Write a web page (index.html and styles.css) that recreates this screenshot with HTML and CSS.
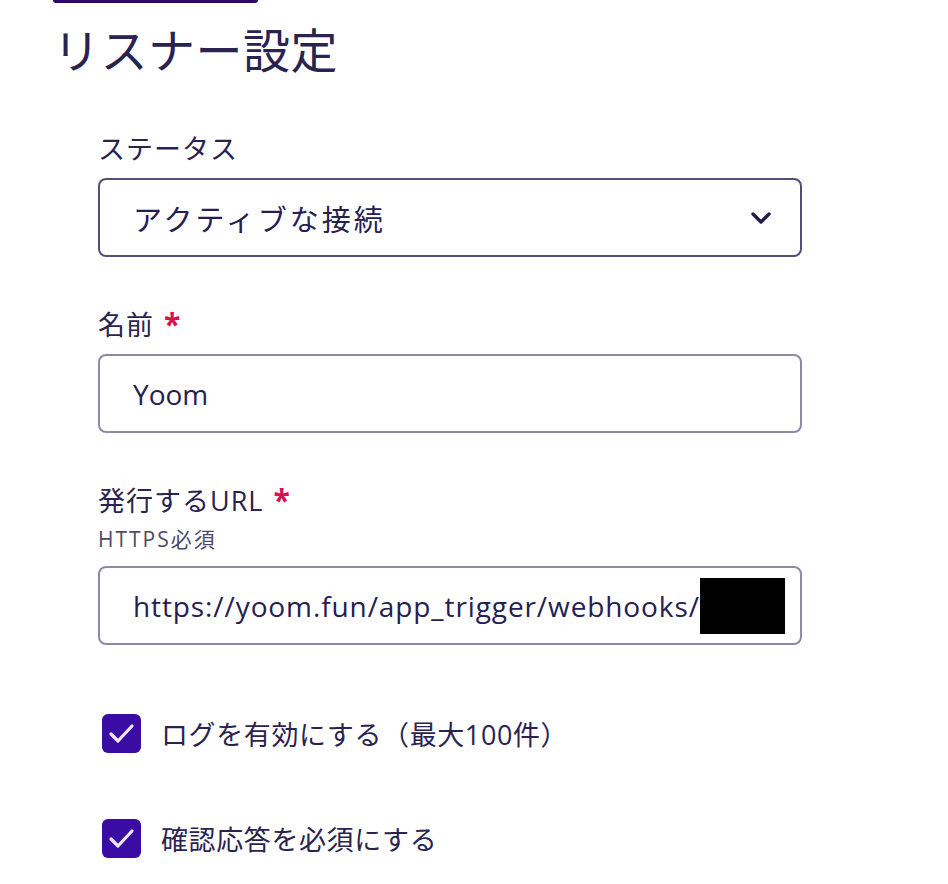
FILE: index.html
```html
<!DOCTYPE html>
<html lang="ja">
<head>
<meta charset="utf-8">
<title>リスナー設定</title>
<link rel="stylesheet" href="styles.css">
</head>
<body>
<div class="page">
  <div class="top-button"></div>
  <h1 class="title">リスナー設定</h1>
  <form class="form">
    <div class="field">
      <label class="label">ステータス</label>
      <div class="control select">
        <span class="value jp">アクティブな接続</span>
        <svg class="chevron" width="22" height="14" viewBox="0 0 22 14"><path d="M3 3 L11 11 L19 3" fill="none" stroke="#231c4a" stroke-width="3.4" stroke-linecap="round" stroke-linejoin="round"/></svg>
      </div>
    </div>
    <div class="field">
      <label class="label">名前 <span class="req">*</span></label>
      <div class="control"><span class="value">Yoom</span></div>
    </div>
    <div class="field">
      <label class="label">発行するURL <span class="req">*</span></label>
      <div class="hint">HTTPS必須</div>
      <div class="control url">
        <span class="value">https://yoom.fun/app_trigger/webhooks/</span>
        <span class="redact"></span>
      </div>
    </div>
    <div class="checks">
      <div class="check-row">
        <span class="checkbox"><svg width="39" height="39" viewBox="0 0 39 39"><path d="M9 20 L16 27 L30 12" fill="none" stroke="#f3e6f4" stroke-width="3.2" stroke-linecap="round" stroke-linejoin="round"/></svg></span>
        <span class="check-label">ログを有効にする（最大100件）</span>
      </div>
      <div class="check-row">
        <span class="checkbox"><svg width="39" height="39" viewBox="0 0 39 39"><path d="M9 20 L16 27 L30 12" fill="none" stroke="#f3e6f4" stroke-width="3.2" stroke-linecap="round" stroke-linejoin="round"/></svg></span>
        <span class="check-label">確認応答を必須にする</span>
      </div>
    </div>
  </form>
</div>
</body>
</html>
```

FILE: styles.css
```css
* { box-sizing: border-box; }
html, body { margin: 0; padding: 0; background: #ffffff; }
body {
  font-family: "Open Sans", "Noto Sans CJK JP", sans-serif;
  color: #2a2350;
}
.page {
  width: 948px;
  height: 884px;
  overflow: hidden;
}
.top-button {
  margin-left: 53px;
  width: 205px;
  height: 3px;
  background: #2b0a5f;
  border-radius: 0 0 6px 6px;
}
.title {
  margin: 17px 0 0 53px;
  font-size: 47px;
  font-weight: 400;
  line-height: 60px;
  color: #2a2350;
  letter-spacing: 0.5px;
}
.form {
  margin: 49px 0 0 98px;
  width: 704px;
}
.field {
  display: flex;
  flex-direction: column;
  margin-bottom: 47px;
}
.label {
  font-size: 27px;
  line-height: 40px;
  margin-bottom: 9px;
  color: #2a2350;
  letter-spacing: 1px;
}
.req {
  color: #d6114f;
  font-weight: 700;
  font-size: 30px;
  margin-left: 2px;
}
.hint {
  font-size: 21px;
  line-height: 28px;
  margin-top: -5px;
  margin-bottom: 13px;
  color: #4d4a68;
  letter-spacing: 2px;
}
.control {
  height: 79px;
  border: 2px solid #8d89a8;
  border-radius: 8px;
  display: flex;
  align-items: center;
  padding: 0 28px 0 33px;
  font-size: 28px;
  color: #262050;
  overflow: hidden;
}
.select {
  border-color: #544e7c;
  justify-content: space-between;
  padding-right: 28px;
}
.value { white-space: nowrap; }
.value.jp { font-size: 29px; letter-spacing: 3px; }
.url { padding-right: 16px; }
.url .value { flex: 0 0 auto; letter-spacing: 0.9px; }
.redact {
  width: 85px;
  height: 56px;
  background: #000;
  margin-left: auto;
  flex: 0 0 85px;
}
.checks {
  margin-top: 69px;
  display: flex;
  flex-direction: column;
  gap: 66px;
}
.check-row {
  display: flex;
  align-items: center;
  gap: 20px;
  padding-left: 4px;
}
.checkbox {
  width: 39px;
  height: 39px;
  border-radius: 6px;
  background: #3a0ca3;
  display: flex;
}
.check-label {
  font-size: 27px;
  color: #2a2350;
  letter-spacing: 0.6px;
}
```
